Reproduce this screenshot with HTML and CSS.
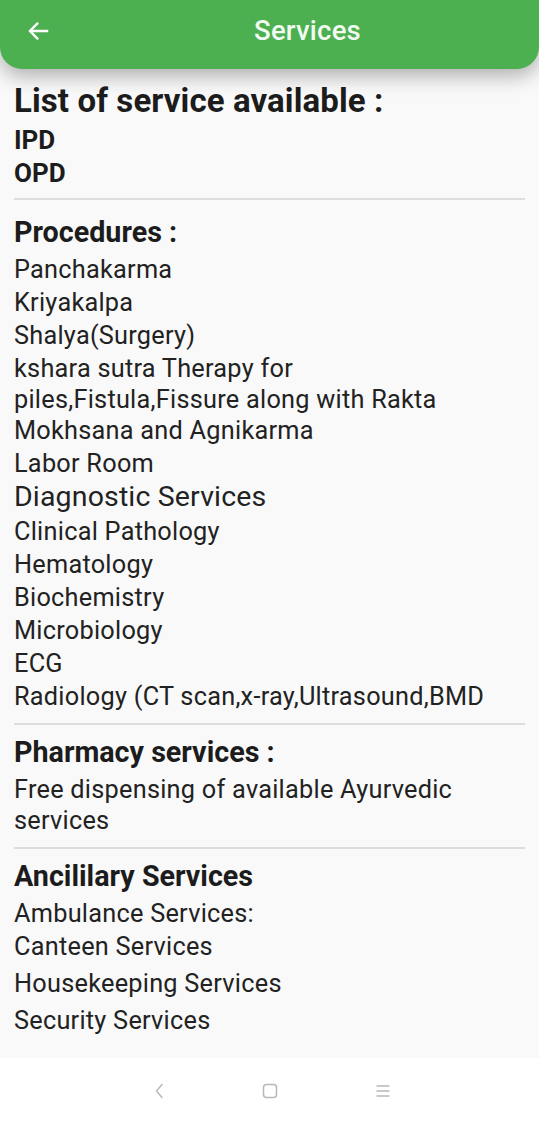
FILE: index.html
```html
<!DOCTYPE html>
<html>
<head>
<meta charset="utf-8">
<link rel="stylesheet" href="styles.css">
</head>
<body>
<div class="screen">
  <header class="appbar">
    <div class="back-box">
      <svg class="back" width="26" height="26" viewBox="0 0 24 24"><path d="M20.5 12H4.5M11.5 5l-7 7 7 7" fill="none" stroke="#fff" stroke-width="2.2" stroke-linecap="round" stroke-linejoin="round"/></svg>
    </div>
    <h1 class="title">Services</h1>
  </header>
  <main class="content">
    <h2 class="h-main">List of service available :</h2>
    <div class="bold-item">IPD</div>
    <div class="bold-item">OPD</div>
    <hr class="divider first">
    <h3 class="h-sec">Procedures :</h3>
    <div class="item">Panchakarma</div>
    <div class="item">Kriyakalpa</div>
    <div class="item">Shalya(Surgery)</div>
    <div class="item">kshara sutra Therapy for piles,Fistula,Fissure along with Rakta Mokhsana and Agnikarma</div>
    <div class="item">Labor Room</div>
    <div class="item big">Diagnostic Services</div>
    <div class="item">Clinical Pathology</div>
    <div class="item">Hematology</div>
    <div class="item">Biochemistry</div>
    <div class="item">Microbiology</div>
    <div class="item">ECG</div>
    <div class="item">Radiology (CT scan,x-ray,Ultrasound,BMD</div>
    <hr class="divider">
    <h3 class="h-sec">Pharmacy services :</h3>
    <div class="item">Free dispensing of available Ayurvedic services</div>
    <hr class="divider">
    <h3 class="h-sec">Ancililary Services</h3>
    <div class="item">Ambulance Services:</div>
    <div class="item">Canteen Services</div>
    <div class="item spaced">Housekeeping Services</div>
    <div class="item spaced">Security Services</div>
  </main>
  <nav class="navbar">
    <svg width="12" height="18" viewBox="0 0 12 18"><path d="M9 2.5L3.5 9 9 15.5" fill="none" stroke="#b8b8b8" stroke-width="1.5" stroke-linecap="round" stroke-linejoin="round"/></svg>
    <svg width="16" height="16" viewBox="0 0 16 16"><rect x="1.5" y="1.5" width="13" height="13" rx="3" fill="none" stroke="#b8b8b8" stroke-width="1.5"/></svg>
    <svg width="16" height="14" viewBox="0 0 16 14"><path d="M1.5 2h13M1.5 7h13M1.5 12h13" stroke="#b8b8b8" stroke-width="1.3"/></svg>
  </nav>
</div>
</body>
</html>
```
FILE: styles.css
```css
html, body {
  margin: 0;
  padding: 0;
}
body {
  font-family: Roboto, "Noto Sans", sans-serif;
  background: #f9f9f9;
  color: #212121;
}
.screen {
  width: 539px;
  height: 1123px;
  display: flex;
  flex-direction: column;
  overflow: hidden;
}
.appbar {
  height: 69px;
  flex: none;
  background: #4caf50;
  border-radius: 0 0 22px 22px;
  box-shadow: 0 7px 20px rgba(0,0,0,0.30);
  display: flex;
  align-items: center;
  position: relative;
  z-index: 2;
}
.back-box {
  width: 76px;
  flex: none;
  display: flex;
  align-items: center;
  padding-left: 25px;
  box-sizing: border-box;
  margin-top: -7px;
}
.title {
  margin: -8px 0 0 0;
  flex: 1;
  text-align: center;
  font-size: 27.5px;
  font-weight: 500;
  letter-spacing: 0.2px;
  color: #f1fbf1;
}
.content {
  flex: 1;
  padding: 12px 14px 0 14px;
  background: #f9f9f9;
}
.h-main {
  margin: 0 0 3px 0;
  font-size: 33px;
  letter-spacing: 0.1px;
  font-weight: 700;
  line-height: 40px;
  color: #1c1c1c;
}
.bold-item {
  font-size: 26px;
  font-weight: 700;
  line-height: 33px;
  color: #1c1c1c;
}
.divider {
  border: none;
  height: 2px;
  background: #dddddd;
  margin: 10px 0 10px 0;
}
.divider.first {
  margin-top: 8px;
  margin-bottom: 15px;
}
.h-sec {
  margin: 0 0 4px 0;
  font-size: 28.7px;
  font-weight: 700;
  line-height: 34px;
  color: #1c1c1c;
}
.h-sec + .item {
  margin-top: 1px;
}
.item {
  max-width: 488px;
  font-size: 25.3px;
  letter-spacing: 0.25px;
  line-height: 31px;
  padding: 1px 0;
  color: #222;
}
.item.big {
  font-size: 28.5px;
  letter-spacing: 0.15px;
  line-height: 33px;
  padding: 0;
  margin-bottom: 2px;
}
.item.spaced {
  margin-top: 4px;
}
.navbar {
  height: 65px;
  flex: none;
  background: #fff;
  display: flex;
  align-items: center;
  justify-content: center;
  gap: 97px;
  padding-left: 5px;
}
```
